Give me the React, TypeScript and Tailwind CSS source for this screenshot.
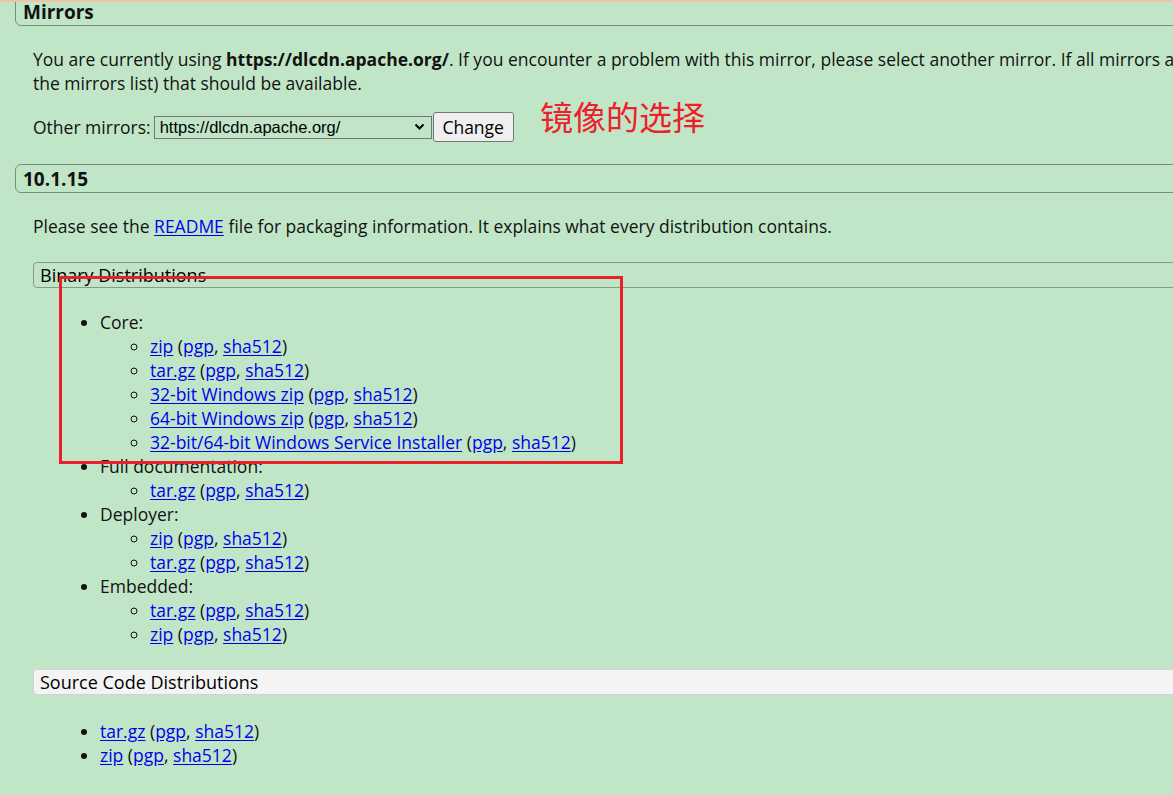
import React from "react";

const L = ({ children }: { children: React.ReactNode }) => (
  <a href="#" className="text-[#0000ee] underline underline-offset-[2px]">{children}</a>
);

const Dl = ({ name }: { name: string }) => (
  <>
    <L>{name}</L> (<L>pgp</L>, <L>sha512</L>)
  </>
);

export default function App() {
  return (
    <div
      className="relative w-[1173px] h-[795px] overflow-hidden bg-[#c1e6c7] text-[#121212] text-[17.5px]"
      style={{ fontFamily: '"Open Sans", "Noto Sans", sans-serif' }}
    >
      <div className="absolute left-0 top-0 w-full h-[2px] bg-[#f0c4a2]" />

      {/* Mirrors header */}
      <div className="ml-[15px] mt-[-10px] h-[36px] w-[1300px] border border-[#7d8c80] rounded-[6px] pl-[7px] pt-[9px] leading-[24px] text-[19px] font-bold">
        Mirrors
      </div>

      <p className="mt-[21px] ml-[33px] leading-[24px] whitespace-nowrap">
        You are currently using <b>https://dlcdn.apache.org/</b>. If you encounter a problem with this mirror, please select
        another mirror. If all mirrors are failing, there are backup mirrors (at the end of
        <br />
        the mirrors list) that should be available.
      </p>

      <div className="mt-[17px] ml-[33px] h-[30px] flex items-center">
        <span className="mr-[3px]">Other mirrors:</span>
        <div className="w-[278px] h-[23px] border border-[#767676] flex items-center justify-between pl-[5px] pr-[6px] text-[16.5px] text-black" style={{ fontFamily: '"Liberation Sans", Arial, sans-serif' }}>
          <span>https://dlcdn.apache.org/</span>
          <svg width="11" height="8" viewBox="0 0 11 8"><path d="M1.5 1.5 L5.5 5.5 L9.5 1.5" fill="none" stroke="#000" strokeWidth="2" /></svg>
        </div>
        <button className="ml-[1px] w-[81px] h-[30px] border border-[#767676] rounded-[3px] bg-[#efefef] text-[17.5px] text-black">
          Change
        </button>
      </div>

      <div
        className="absolute left-[540px] top-[100px] text-[33px] leading-none text-[#ec2129]"
        style={{ fontFamily: '"Noto Sans CJK SC", sans-serif' }}
      >
        镜像的选择
      </div>

      {/* Version header */}
      <div className="ml-[15px] mt-[22px] h-[29px] w-[1300px] border border-[#7d8c80] rounded-[6px] pl-[7px] pt-[1px] leading-[27px] text-[19px] font-bold">
        10.1.15
      </div>

      <p className="mt-[21px] ml-[33px] leading-[24px]">
        Please see the <L>README</L> file for packaging information. It explains what every distribution contains.
      </p>

      <div className="ml-[33px] mt-[24px] h-[26px] w-[1300px] border border-[#8b998d] rounded-[4px] pl-[6px] leading-[24px] text-[18px] font-medium text-black">
        Binary Distributions
      </div>

      <ul className="mt-[22px] pl-[100px] list-disc leading-[24px]">
        <li>
          Core:
          <ul className="list-[circle] pl-[50px]">
            <li><Dl name="zip" /></li>
            <li><Dl name="tar.gz" /></li>
            <li><Dl name="32-bit Windows zip" /></li>
            <li><Dl name="64-bit Windows zip" /></li>
            <li><Dl name="32-bit/64-bit Windows Service Installer" /></li>
          </ul>
        </li>
        <li>
          Full documentation:
          <ul className="list-[circle] pl-[50px]">
            <li><Dl name="tar.gz" /></li>
          </ul>
        </li>
        <li>
          Deployer:
          <ul className="list-[circle] pl-[50px]">
            <li><Dl name="zip" /></li>
            <li><Dl name="tar.gz" /></li>
          </ul>
        </li>
        <li>
          Embedded:
          <ul className="list-[circle] pl-[50px]">
            <li><Dl name="tar.gz" /></li>
            <li><Dl name="zip" /></li>
          </ul>
        </li>
      </ul>

      <div className="ml-[33px] mt-[23px] h-[26px] w-[1300px] border border-[#d3d3d3] rounded-[4px] bg-[#f4f4f4] pl-[6px] leading-[24px] text-[18px] font-medium text-black">
        Source Code Distributions
      </div>

      <ul className="mt-[24px] pl-[100px] list-disc leading-[24px]">
        <li><Dl name="tar.gz" /></li>
        <li><Dl name="zip" /></li>
      </ul>

      {/* annotation box */}
      <div className="absolute left-[59px] top-[276px] w-[564px] h-[188px] border-[3px] border-[#e8202a]" />
    </div>
  );
}
